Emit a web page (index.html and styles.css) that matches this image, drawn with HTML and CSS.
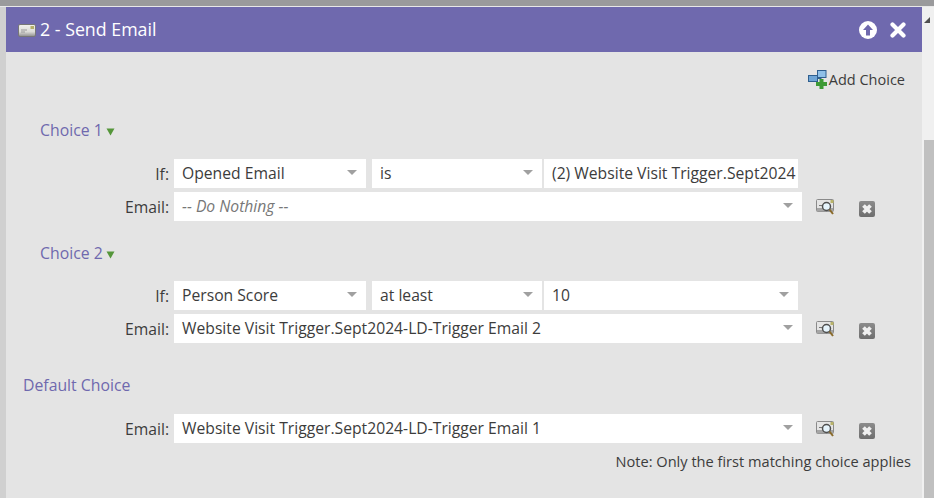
FILE: index.html
```html
<!DOCTYPE html>
<html lang="en">
<head>
<meta charset="utf-8">
<title>2 - Send Email</title>
<link rel="stylesheet" href="styles.css">
</head>
<body>
<svg class="defs" width="0" height="0" aria-hidden="true">
  <defs>
    <linearGradient id="delg" x1="0" y1="0" x2="0" y2="1"><stop offset="0" stop-color="#8c8c8c"/><stop offset="1" stop-color="#6e6e6e"/></linearGradient>
    <linearGradient id="mailg" x1="0" y1="0" x2="0" y2="1"><stop offset="0" stop-color="#f2f2ee"/><stop offset=".6" stop-color="#dcdcd8"/><stop offset="1" stop-color="#8e8e8e"/></linearGradient>
    <symbol id="find" viewBox="0 0 20 17"><rect x=".5" y=".5" width="17" height="12" rx="1" fill="#e4e4e4" stroke="#8a8a8a"/><path d="M1 9h16v3.500H1z" fill="#a5a5a5"/><path d="M3 6.500h3" stroke="#777"/><rect x="14.500" y="1" width="3" height="3" fill="#b9b46a"/><circle cx="10.500" cy="7.500" r="4" fill="#e6f4fc" stroke="#4f4f4f" stroke-width="1.500"/><path d="M13.500 10.500l3.500 4.500" stroke="#8a6a2a" stroke-width="2"/></symbol>
    <symbol id="del" viewBox="0 0 16 16"><rect width="16" height="16" rx="2" fill="url(#delg)"/><path d="M4.500 4.500l7 7M11.500 4.500l-7 7" stroke="#f0f0f0" stroke-width="3.800"/></symbol>
    <symbol id="tri" viewBox="0 0 9 8"><path d="M.5 .5h8L4.500 7.500z" fill="#55963a"/></symbol>
  </defs>
</svg>
<div class="topbar"></div>
<div class="shell">
  <div class="gutter"></div>
  <main class="panel">
    <header class="head">
      <svg class="mail-icon" width="18" height="13" viewBox="0 0 18 13"><rect x=".5" y=".5" width="17" height="12" rx="1.500" fill="url(#mailg)" stroke="#777"/><rect x="12.500" y="2" width="3.500" height="3" fill="#b5b06a"/><path d="M3 6h6M3 8h4" stroke="#999"/></svg>
      <h1 class="title">2 - Send Email</h1>
      <span class="head-actions">
        <svg width="18" height="18" viewBox="0 0 18 18"><circle cx="9" cy="9" r="9" fill="#fff"/><path d="M9 3.500 14 9h-3v5.500H7V9H4z" fill="#6f69ae"/></svg>
        <svg width="16" height="16" viewBox="0 0 16 16"><path d="M2.500 2.500l11 11M13.500 2.500l-11 11" stroke="#fff" stroke-width="4.200" stroke-linecap="round"/></svg>
      </span>
    </header>
    <div class="add-row">
      <svg width="20" height="19" viewBox="0 0 20 19"><rect x="9.500" y=".5" width="8.500" height="7" fill="#8fc0e8" stroke="#2f5f8f"/><rect x=".5" y="5.500" width="9" height="6" fill="#6fa5d6" stroke="#2f5f8f"/><path d="M9.500 8.500h4" stroke="#2f5f8f"/><path d="M11.500 9h4v3h3.500v4h-3.500v3h-4v-3H8v-4h3.500z" fill="#3d9a35"/></svg>
      <span>Add Choice</span>
    </div>

    <h2 class="choice first">Choice 1<svg class="tri" width="9" height="8"><use href="#tri"/></svg></h2>
    <div class="row">
      <span class="label">If:</span>
      <div class="sel s1">Opened Email<i class="caret"></i></div>
      <div class="sel s2">is<i class="caret"></i></div>
      <div class="sel s3">(2) Website Visit Trigger.Sept2024</div>
    </div>
    <div class="row email">
      <span class="label">Email:</span>
      <div class="sel wide muted">-- Do Nothing --<i class="caret"></i></div>
      <svg class="find" width="20" height="17"><use href="#find"/></svg>
      <svg class="del" width="16" height="16"><use href="#del"/></svg>
    </div>

    <h2 class="choice second">Choice 2<svg class="tri" width="9" height="8"><use href="#tri"/></svg></h2>
    <div class="row">
      <span class="label">If:</span>
      <div class="sel s1">Person Score<i class="caret"></i></div>
      <div class="sel s2">at least<i class="caret"></i></div>
      <div class="sel s3">10<i class="caret"></i></div>
    </div>
    <div class="row email">
      <span class="label">Email:</span>
      <div class="sel wide">Website Visit Trigger.Sept2024-LD-Trigger Email 2<i class="caret"></i></div>
      <svg class="find" width="20" height="17"><use href="#find"/></svg>
      <svg class="del" width="16" height="16"><use href="#del"/></svg>
    </div>

    <h2 class="choice default">Default Choice</h2>
    <div class="row email">
      <span class="label">Email:</span>
      <div class="sel wide">Website Visit Trigger.Sept2024-LD-Trigger Email 1<i class="caret"></i></div>
      <svg class="find" width="20" height="17"><use href="#find"/></svg>
      <svg class="del" width="16" height="16"><use href="#del"/></svg>
    </div>
    <p class="note">Note: Only the first matching choice applies</p>
  </main>
  <aside class="scroll">
    <div class="scroll-arrow"></div>
    <div class="scroll-thumb"></div>
  </aside>
</div>
</body>
</html>
```
FILE: styles.css
```css
* { box-sizing: border-box; }
html, body { margin: 0; height: 100%; overflow: hidden; }
body {
  font-family: "Open Sans", "Liberation Sans", sans-serif;
  font-size: 15.700px;
  color: #3c3c3c;
  background: #e4e4e4;
}
.defs { position: absolute; }
.topbar { height: 6px; background: #9a9a9c; }
.shell { display: flex; height: 492px; border-top: 1px solid #e8e8e8; }
.gutter { width: 6px; background: #d0d0d0; }
.panel { width: 916px; background: #e4e4e4; position: relative; }
.head {
  height: 45px;
  background: #6f69ae;
  display: flex;
  align-items: center;
  padding: 0 16px 0 12px;
  color: #fff;
}
.mail-icon { margin-top: 2px; flex: none; }
.title { margin: 0 0 0 4px; font-size: 17.800px; font-weight: 400; line-height: 45px; }
.head-actions { margin-left: auto; display: flex; align-items: center; gap: 13px; }
.add-row {
  display: flex;
  justify-content: flex-end;
  align-items: center;
  gap: 1px;
  height: 20px;
  margin-top: 17px;
  padding-right: 17px;
  font-size: 14.500px;
}
.choice { margin: 0; font-size: 15.800px; font-weight: 400; color: #6f69ae; line-height: 20px; }
.choice.first { margin: 31px 0 19px 34px; }
.choice.second { margin: 22px 0 18px 34px; }
.choice.default { margin: 32px 0 19px 17px; }
.tri { margin-left: 3px; }
.row { display: flex; align-items: center; height: 29px; margin-bottom: 4px; }
.label { width: 163px; text-align: right; flex: none; }
.sel {
  position: relative;
  height: 29px;
  line-height: 28px;
  background: #fff;
  padding-left: 8px;
  flex: none;
  white-space: nowrap;
  overflow: hidden;
}
.s1 { width: 192px; margin-left: 5px; }
.s2 { width: 170px; margin-left: 6px; }
.s3 { width: 254px; margin-left: 2px; }
.wide { width: 628px; margin-left: 5px; }
.muted { color: #777; font-style: italic; }
.caret {
  position: absolute;
  right: 9px;
  top: 11px;
  width: 0;
  height: 0;
  border-left: 5px solid transparent;
  border-right: 5px solid transparent;
  border-top: 5px solid #a0a0a0;
}
.find { margin-left: 14px; flex: none; margin-top: 2px; }
.del { margin-left: 23px; flex: none; margin-top: 5px; }
.note { margin: 8px 0 0; text-align: right; padding-right: 11px; font-size: 14.600px; line-height: 20px; }
.scroll { width: 12px; background: #f0f0f0; position: relative; }
.scroll-arrow {
  position: absolute;
  top: 10px;
  left: 2px;
  border-bottom: 6px solid #505050;
  border-left: 6px solid transparent;
}
.scroll-thumb { margin: 133px 0 0 2px; height: 360px; background: #c0c0c0; }
```
